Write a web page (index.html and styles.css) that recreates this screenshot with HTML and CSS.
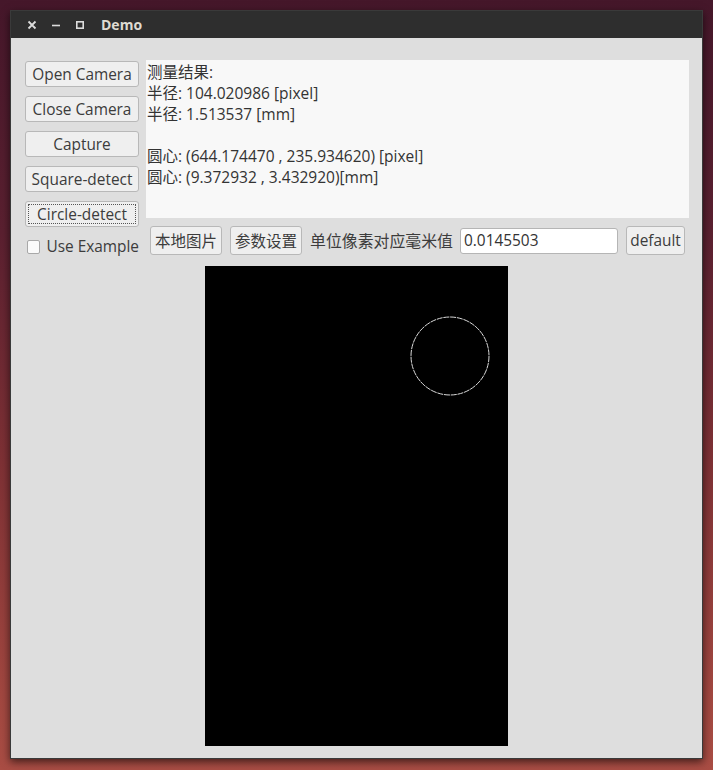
FILE: index.html
```html
<!DOCTYPE html>
<html>
<head>
<meta charset="utf-8">
<link rel="stylesheet" href="styles.css">
</head>
<body>
<div class="window">
  <div class="titlebar">
    <span class="tb-btn"><svg width="10" height="10" viewBox="0 0 10 10"><path d="M1.5 1.5 L8.5 8.5 M8.5 1.5 L1.5 8.5" stroke="#dcdcdc" stroke-width="1.8"/></svg></span>
    <span class="tb-btn"><svg width="10" height="10" viewBox="0 0 10 10"><path d="M1 5.5 H9" stroke="#dcdcdc" stroke-width="1.6"/></svg></span>
    <span class="tb-btn"><svg width="10" height="10" viewBox="0 0 10 10"><rect x="1.8" y="1.8" width="6.4" height="6.4" fill="none" stroke="#dcdcdc" stroke-width="1.6"/></svg></span>
    <span class="title">Demo</span>
  </div>
  <div class="content">
    <div class="top">
      <div class="left">
        <div class="btn">Open Camera</div>
        <div class="btn">Close Camera</div>
        <div class="btn">Capture</div>
        <div class="btn">Square-detect</div>
        <div class="btn focus"><span class="focus-ring">Circle-detect</span></div>
        <label class="check"><span class="box"></span>Use Example</label>
      </div>
      <div class="right">
        <div class="result">
          <div>测量结果:</div>
          <div>半径: 104.020986 [pixel]</div>
          <div>半径: 1.513537 [mm]</div>
          <div>&nbsp;</div>
          <div>圆心: (644.174470 , 235.934620) [pixel]</div>
          <div>圆心: (9.372932 , 3.432920)[mm]</div>
        </div>
        <div class="row2">
          <div class="btn small cjk">本地图片</div>
          <div class="btn small cjk">参数设置</div>
          <span class="lbl">单位像素对应毫米值</span>
          <div class="input">0.0145503</div>
          <div class="btn small def">default</div>
        </div>
      </div>
    </div>
    <div class="view">
      <svg width="303" height="480" viewBox="0 0 303 480">
        <circle cx="245" cy="90" r="39" fill="none" stroke="#dadada" stroke-width="1" stroke-dasharray="6 0.8"/>
      </svg>
    </div>
  </div>
</div>
</body>
</html>
```

FILE: styles.css
```css
html, body {
  margin: 0;
  padding: 0;
}
body {
  width: 713px;
  height: 770px;
  overflow: hidden;
  background: linear-gradient(180deg, #45172a 0%, #5a2030 30%, #7e3135 60%, #a14740 90%, #a94d44 100%);
  font-family: "Open Sans", "Noto Sans CJK SC", sans-serif;
  color: #3c3c3c;
}
.window {
  margin: 10px 0 0 10px;
  width: 691px;
  height: 747px;
  border: 1px solid #3a3a3a;
  background: #dedede;
  box-shadow: 0 3px 8px rgba(0,0,0,0.6);
  display: flex;
  flex-direction: column;
}
.titlebar {
  height: 27px;
  background: #2e2e2e;
  display: flex;
  align-items: center;
  padding-left: 14px;
  flex: none;
}
.tb-btn {
  width: 14px;
  height: 14px;
  margin-right: 10px;
  display: flex;
  align-items: center;
  justify-content: center;
}
.title {
  margin-left: 4px;
  color: #dfdbd2;
  font-weight: bold;
  font-size: 14px;
  font-family: "Open Sans", sans-serif;
}
.content {
  flex: 1;
  padding: 22px 0 0 0;
  display: flex;
  flex-direction: column;
}
.top {
  display: flex;
  padding-left: 14px;
}
.left {
  width: 114px;
  display: flex;
  flex-direction: column;
  gap: 9px;
  padding-top: 1px;
}
.btn {
  box-sizing: border-box;
  height: 26px;
  border: 1px solid #b8b8b8;
  border-radius: 3px;
  background: #efefef;
  display: flex;
  align-items: center;
  justify-content: center;
  font-size: 15.4px;
  white-space: nowrap;
}
.btn.focus {
  padding: 2px;
}
.focus-ring {
  flex: 1;
  align-self: stretch;
  display: flex;
  align-items: center;
  justify-content: center;
  border: 1px dotted #555;
}
.check {
  display: flex;
  align-items: center;
  font-size: 15.4px;
  line-height: 18px;
  margin-top: 2px;
  margin-left: 2px;
  white-space: nowrap;
}
.box {
  width: 12px;
  height: 12px;
  border: 1px solid #a8a8a8;
  border-radius: 2px;
  background: #fafafa;
  margin-right: 6px;
}
.right {
  margin-left: 7px;
  width: 543px;
}
.result {
  height: 158px;
  background: #f8f8f8;
  box-sizing: border-box;
  padding: 2px 0 0 1px;
  font-size: 15.5px;
  line-height: 21px;
  color: #333;
}
.row2 {
  display: flex;
  align-items: center;
  margin-top: 8px;
  margin-left: 4px;
  height: 29px;
}
.btn.small {
  height: 29px;
  padding: 0 4px;
}
.btn.cjk {
  width: 72px;
  font-size: 15.5px;
}
.btn.small + .btn.small {
  margin-left: 8px;
}
.lbl {
  margin-left: 8px;
  font-size: 15.9px;
  white-space: nowrap;
}
.input {
  box-sizing: border-box;
  margin-left: 7px;
  width: 158px;
  height: 26px;
  border: 1px solid #b5b5b5;
  border-radius: 3px;
  background: #fff;
  font-size: 15.4px;
  padding-left: 3px;
  display: flex;
  align-items: center;
  color: #333;
}
.btn.def {
  margin-left: 8px;
  width: 59px;
}
.view {
  margin: 10px auto 0 auto;
  width: 303px;
  height: 480px;
  background: #000;
}
.view svg {
  display: block;
}
```
